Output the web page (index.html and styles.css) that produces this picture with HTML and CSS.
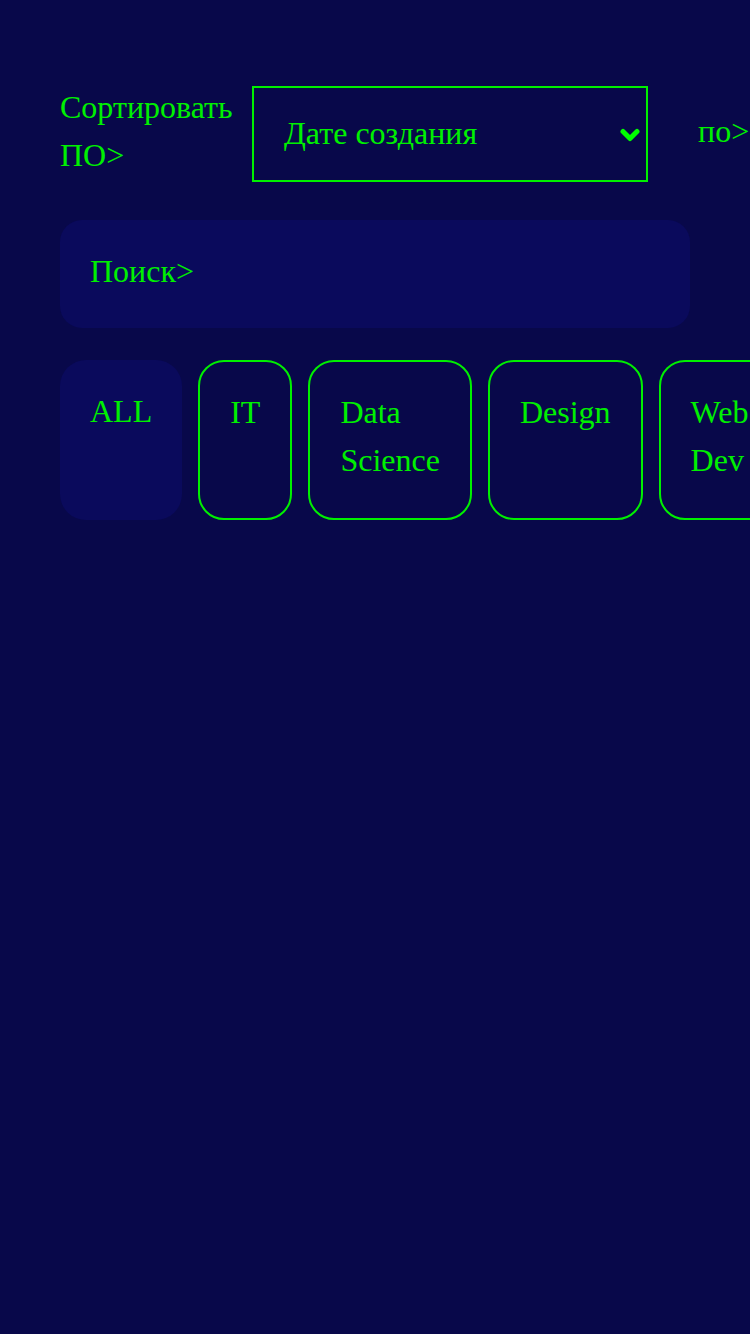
FILE: index.html
```html
<!DOCTYPE html>
<html lang="ru">
<head>
<meta charset="utf-8">
<link rel="stylesheet" href="styles.css">
</head>
<body>
<div class="page">
  <div class="sort-row">
    <div class="sort-label">Сортировать ПО&gt;</div>
    <div class="select">
      <span class="select-text">Дате создания</span>
      <svg class="chev" width="20" height="14" viewBox="0 0 20 14"><path d="M3 3.5 L10 10.5 L17 3.5" fill="none" stroke="#00ff00" stroke-width="5" stroke-linecap="round" stroke-linejoin="round"/></svg>
    </div>
    <div class="order">по&gt;</div>
  </div>
  <div class="search">Поиск&gt;</div>
  <div class="chips">
    <div class="chip active">ALL</div>
    <div class="chip">IT</div>
    <div class="chip">Data Science</div>
    <div class="chip">Design</div>
    <div class="chip">Web Dev</div>
  </div>
</div>
</body>
</html>
```
FILE: styles.css
```css
html, body {
  margin: 0;
  padding: 0;
  background: #08084a;
  width: 750px;
  height: 1334px;
  overflow: hidden;
}
.page {
  padding: 83px 0 0 60px;
  font-family: "Liberation Serif", serif;
  font-size: 32px;
  line-height: 48px;
  color: #00f000;
}
.sort-row {
  display: flex;
  align-items: flex-start;
  white-space: nowrap;
}
.sort-label {
  width: 172px;
  white-space: normal;
  margin-right: 20px;
}
.select {
  box-sizing: border-box;
  width: 396px;
  height: 96px;
  border: 2px solid #00f000;
  display: flex;
  align-items: center;
  justify-content: space-between;
  padding: 0 6px 2px 30px;
  margin-top: 3px;
}
.chev { display: block; margin-top: 4px; }
.order {
  margin-left: 50px;
  margin-top: 24px;
}
.search {
  margin-top: 38px;
  width: 630px;
  height: 108px;
  box-sizing: border-box;
  padding: 27px 30px 33px;
  background: #0a0a5c;
  border-radius: 22px;
}
.chips {
  margin-top: 32px;
  display: flex;
  gap: 16px;
  white-space: nowrap;
}
.chip {
  box-sizing: border-box;
  width: min-content;
  height: 160px;
  border: 2px solid #00f000;
  border-radius: 26px;
  padding: 26px 30px;
  white-space: normal;
  flex-shrink: 0;
}
.chip.active {
  background: #0a0a5c;
  border: 0;
  padding: 27px 30px;
}
```
